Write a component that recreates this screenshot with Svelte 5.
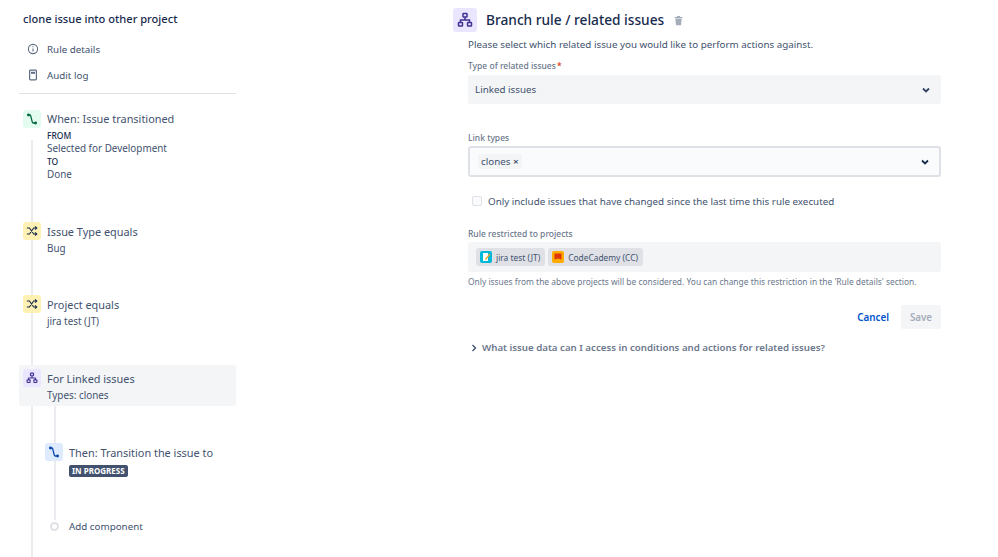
<script>
  const nav = [
    { label: 'Rule details', kind: 'info' },
    { label: 'Audit log', kind: 'log' }
  ];
</script>

{#snippet branch(size)}
  <svg width={size} height={size} viewBox="0 0 16 16" fill="none" stroke="currentColor" stroke-width="1.5">
    <rect x="6" y="1.5" width="4" height="3.5" rx=".6" />
    <rect x="1.5" y="10.5" width="4" height="3.5" rx=".6" />
    <rect x="10.5" y="10.5" width="4" height="3.5" rx=".6" />
    <path d="M8 5v3M3.5 10.5V8h9v2.5" />
  </svg>
{/snippet}

{#snippet transition()}
  <svg width="12" height="12" viewBox="0 0 12 12" fill="none" stroke="currentColor" stroke-width="1.3">
    <path d="M2.5 2h1.2c.6 0 .9.3 1 .8l1.6 6.4c.1.5.4.8 1 .8h2.2" />
    <circle cx="2.4" cy="2" r="1.4" fill="currentColor" stroke="none" />
    <circle cx="9.6" cy="10" r="1.4" fill="currentColor" stroke="none" />
  </svg>
{/snippet}

{#snippet shuffle()}
  <svg width="12" height="12" viewBox="0 0 14 14" fill="none" stroke="currentColor" stroke-width="1.3">
    <path d="M1 3.5h3l5 7h3M1 10.5h3l5-7h3" />
    <path d="M10.5 1.8 12.5 3.5l-2 1.7M10.5 8.8l2 1.7-2 1.7" />
  </svg>
{/snippet}

{#snippet chevron()}
  <svg width="10" height="10" viewBox="0 0 10 10" fill="none" stroke="currentColor" stroke-width="1.8">
    <path d="M2 3.5 5 6.5 8 3.5" />
  </svg>
{/snippet}

<div class="page">
  <aside class="sidebar">
    <h1 class="rule-title">clone issue into other project</h1>
    <nav class="nav">
      {#each nav as item}
        <div class="nav-row">
          <span class="nav-icon">
            {#if item.kind === 'info'}
              <svg width="12" height="12" viewBox="0 0 12 12" fill="none" stroke="currentColor" stroke-width="1.1">
                <circle cx="6" cy="6" r="4.6" />
                <path d="M6 5.4v3M6 3.2v1.1" />
              </svg>
            {:else}
              <svg width="12" height="12" viewBox="0 0 12 12" fill="none" stroke="currentColor" stroke-width="1.2">
                <rect x="2.6" y="1.2" width="6.8" height="9.6" rx=".8" />
                <path d="M4 3.8h4" stroke-width="2" />
              </svg>
            {/if}
          </span>
          <span>{item.label}</span>
        </div>
      {/each}
    </nav>
    <div class="divider"></div>

    <div class="flow">
      <div class="spine"></div>

      <div class="step step-when">
        <span class="badge green">{@render transition()}</span>
        <div class="step-text">
          <div class="step-name">When: Issue transitioned</div>
          <div class="sub from"><b>FROM</b></div>
          <div class="sub">Selected for Development</div>
          <div class="sub"><b>TO</b></div>
          <div class="sub">Done</div>
        </div>
      </div>

      <div class="step step-type">
        <span class="badge yellow">{@render shuffle()}</span>
        <div class="step-text">
          <div class="step-name">Issue Type equals</div>
          <div class="sub">Bug</div>
        </div>
      </div>

      <div class="step step-project">
        <span class="badge yellow">{@render shuffle()}</span>
        <div class="step-text">
          <div class="step-name">Project equals</div>
          <div class="sub">jira test (JT)</div>
        </div>
      </div>

      <div class="step step-branch">
        <span class="badge purple">{@render branch(12)}</span>
        <div class="step-text">
          <div class="step-name">For Linked issues</div>
          <div class="sub">Types: clones</div>
        </div>
      </div>

      <div class="nested">
        <div class="nested-spine"></div>
        <div class="step step-then">
          <span class="badge blue">{@render transition()}</span>
          <div class="step-text">
            <div class="step-name">Then: Transition the issue to</div>
            <span class="lozenge">IN PROGRESS</span>
          </div>
        </div>
        <div class="add-row">
          <span class="add-dot"></span>
          <span>Add component</span>
        </div>
      </div>
    </div>
  </aside>

  <main class="panel">
    <header class="panel-head">
      <span class="head-icon">{@render branch(16)}</span>
      <h2>Branch rule / related issues</h2>
      <svg class="trash" width="11" height="11" viewBox="0 0 11 11" fill="currentColor">
        <path d="M1.5 2h8v1h-8zM4 1h3v1H4zM2.3 3.6h6.4L8 10.2H3z" />
      </svg>
    </header>

    <div class="form">
      <p class="intro">Please select which related issue you would like to perform actions against.</p>

      <div class="label first-label">Type of related issues<span class="req">*</span></div>
      <div class="select plain">
        <span class="select-value">Linked issues</span>
        <span class="chev">{@render chevron()}</span>
      </div>

      <div class="label link-label">Link types</div>
      <div class="select bordered">
        <span class="tag">clones <span class="x">×</span></span>
        <span class="chev dark">{@render chevron()}</span>
      </div>

      <label class="check-row">
        <span class="checkbox"></span>
        <span>Only include issues that have changed since the last time this rule executed</span>
      </label>

      <div class="label restrict-label">Rule restricted to projects</div>
      <div class="projects">
        <span class="project">
          <span class="avatar cyan">
            <svg width="12" height="12" viewBox="0 0 12 12"><path d="M3 2h5v8H3z" fill="#fff" /><path d="M5 8 9.5 2.5l1 1L6 9z" fill="#f5a623" /></svg>
          </span>
          jira test (JT)
        </span>
        <span class="project">
          <span class="avatar amber">
            <svg width="12" height="12" viewBox="0 0 12 12"><path d="M2.5 2.5h7v6l-3.5-1-3.5 1z" fill="#de350b" /></svg>
          </span>
          CodeCademy (CC)
        </span>
      </div>
      <p class="help">Only issues from the above projects will be considered. You can change this restriction in the 'Rule details' section.</p>

      <div class="actions">
        <button class="cancel">Cancel</button>
        <button class="save" disabled>Save</button>
      </div>

      <div class="disclosure">
        <svg width="8" height="8" viewBox="0 0 8 8" fill="none" stroke="#42526e" stroke-width="1.4"><path d="M2.5 1 5.5 4 2.5 7" /></svg>
        <span>What issue data can I access in conditions and actions for related issues?</span>
      </div>
    </div>
  </main>
</div>

<style>
  :global(body) {
    margin: 0;
    background: #fff;
  }
  .page {
    display: flex;
    width: 998px;
    height: 557px;
    overflow: hidden;
    font-family: "Noto Sans", "Open Sans", sans-serif;
    color: #42526e;
    font-size: 9.8px;
    line-height: 13px;
  }
  .sidebar {
    width: 217px;
    margin-left: 19px;
    flex: none;
  }
  .rule-title {
    margin: 11px 0 0 4px;
    font-size: 11.1px;
    line-height: 15px;
    font-weight: 500;
    color: #172b4d;
  }
  .nav {
    margin-top: 10px;
    display: flex;
    flex-direction: column;
  }
  .nav-row {
    height: 26px;
    display: flex;
    align-items: center;
    gap: 8px;
    padding-left: 8px;
    font-size: 9.8px;
    color: #42526e;
  }
  .nav-icon {
    width: 12px;
    height: 12px;
    display: flex;
    color: #5e6c84;
  }
  .divider {
    margin-top: 5px;
    height: 1px;
    background: #dfe1e6;
  }
  .flow {
    position: relative;
  }
  .spine {
    position: absolute;
    left: 12px;
    top: 30px;
    height: 440px;
    width: 2px;
    background: #ebecf0;
  }
  .step {
    position: relative;
    display: flex;
    gap: 6px;
    padding-left: 4px;
  }
  .badge {
    width: 18px;
    height: 18px;
    border-radius: 3px;
    display: flex;
    align-items: center;
    justify-content: center;
    flex: none;
  }
  .green { background: #e3fcef; color: #006644; }
  .yellow { background: #fff0b3; color: #172b4d; }
  .purple { background: #eae6ff; color: #403294; }
  .blue { background: #deebff; color: #0747a6; }
  .step-name {
    font-size: 10.9px;
    line-height: 18px;
    color: #42526e;
  }
  .step-when .step-name { margin-bottom: 1px; }
  .sub {
    font-size: 9.9px;
    line-height: 13px;
    color: #42526e;
  }
  .sub b {
    font-weight: 500;
    font-size: 8.5px;
    color: #172b4d;
  }
  .step-when { margin-top: 16px; }
  .step-type { margin-top: 41px; }
  .step-type .step-text, .step-project .step-text { padding-top: 1px; }
  .step-project { margin-top: 40px; }
  .step-project .sub, .step-type .sub { margin-top: 1px; }
  .step-branch {
    margin-top: 37px;
    height: 41px;
    background: #f4f5f7;
    border-radius: 3px;
    align-items: flex-start;
    padding-top: 4px;
    box-sizing: border-box;
  }
  .step-branch .step-text { padding-top: 1px; }
  .step-branch .sub { margin-top: 1px; }
  .nested {
    position: relative;
    padding-left: 26px;
    overflow: hidden;
  }
  .nested-spine {
    position: absolute;
    left: 35px;
    top: 0;
    height: 114px;
    width: 2px;
    background: #ebecf0;
  }
  .step-then {
    margin-top: 37px;
    padding-left: 0;
    gap: 6px;
  }
  .step-then .step-text { padding-top: 1px; }
  .lozenge {
    display: block;
    width: fit-content;
    margin-top: 3px;
    padding: 0 3px;
    height: 12px;
    line-height: 12px;
    border-radius: 2px;
    background: #42526e;
    color: #fff;
    font-size: 8px;
    font-weight: 700;
  }
  .add-row {
    position: relative;
    margin-top: 43px;
    display: flex;
    align-items: center;
    gap: 10px;
    font-size: 9.8px;
    padding-left: 5px;
  }
  .add-dot {
    width: 5px;
    height: 5px;
    border: 2px solid #dfe1e6;
    background: #fff;
    border-radius: 50%;
    flex: none;
  }

  .panel {
    width: 488px;
    margin-left: 217px;
    flex: none;
  }
  .panel-head {
    margin-top: 8px;
    display: flex;
    align-items: center;
    height: 24px;
  }
  .head-icon {
    width: 24px;
    height: 24px;
    border-radius: 3px;
    background: #eae6ff;
    color: #403294;
    display: flex;
    align-items: center;
    justify-content: center;
  }
  h2 {
    margin: 0 0 0 9px;
    font-size: 13.7px;
    font-weight: 500;
    color: #172b4d;
    line-height: 24px;
  }
  .trash {
    margin-left: 9px;
    color: #a5adba;
  }
  .form {
    margin-left: 15px;
    width: 473px;
  }
  .intro {
    margin: 0;
    font-size: 9.8px;
    line-height: 13px;
    color: #42526e;
    padding-top: 6px;
  }
  .label {
    font-size: 8.5px;
    line-height: 11px;
    color: #6b778c;
    font-weight: 500;
  }
  .first-label { margin-top: 9px; }
  .req { color: #de350b; margin-left: 1px; }
  .select {
    box-sizing: border-box;
    display: flex;
    align-items: center;
    justify-content: space-between;
    border-radius: 3px;
    background: #f4f5f7;
    font-size: 9.8px;
    color: #172b4d;
  }
  .plain {
    height: 29px;
    margin-top: 4px;
    padding: 0 10px 0 7px;
    color: #42526e;
  }
  .link-label { margin-top: 28px; }
  .bordered {
    height: 31px;
    margin-top: 3px;
    padding: 0 9px 0 8px;
    background: #fafbfc;
    border: 2px solid #dfe1e6;
  }
  .tag {
    background: #f4f5f7;
    border-radius: 2px;
    padding: 0 3px;
    line-height: 15px;
    color: #42526e;
  }
  .x { color: #172b4d; }
  .chev {
    display: flex;
    color: #344563;
  }
  .chev.dark { color: #172b4d; }
  .check-row {
    margin-top: 17px;
    display: flex;
    align-items: center;
    gap: 6px;
    padding-left: 4px;
    height: 14px;
    font-size: 9.8px;
    color: #42526e;
  }
  .checkbox {
    box-sizing: border-box;
    width: 10px;
    height: 10px;
    border: 1.5px solid #dfe1e6;
    border-radius: 2px;
    background: #fafbfc;
    flex: none;
  }
  .restrict-label { margin-top: 20px; }
  .projects {
    margin-top: 3px;
    height: 30px;
    box-sizing: border-box;
    background: #f4f5f7;
    border-radius: 3px;
    display: flex;
    align-items: center;
    gap: 3px;
    padding-left: 8px;
  }
  .project {
    display: flex;
    align-items: center;
    gap: 4px;
    height: 18px;
    padding: 0 5px 0 4px;
    background: #dfe1e6;
    border-radius: 3px;
    font-size: 8.4px;
    color: #42526e;
  }
  .avatar {
    width: 12px;
    height: 12px;
    border-radius: 2px;
    display: flex;
  }
  .cyan { background: #00b8d9; }
  .amber { background: #ffab00; }
  .help {
    margin: 4px 0 0;
    font-size: 8.42px;
    line-height: 11px;
    color: #6b778c;
  }
  .actions {
    margin-top: 18px;
    display: flex;
    justify-content: flex-end;
    align-items: center;
    gap: 12px;
  }
  button {
    font: inherit;
    border: 0;
    font-size: 9.8px;
    font-weight: 600;
    padding: 0;
    background: none;
  }
  .cancel { color: #0052cc; }
  .save {
    width: 40px;
    height: 24px;
    border-radius: 3px;
    background: #f4f5f7;
    color: #a5adba;
  }
  .disclosure {
    margin-top: 12px;
    display: flex;
    align-items: center;
    gap: 4px;
    padding-left: 2px;
    font-size: 9.7px;
    font-weight: 600;
    color: #6b778c;
  }
</style>
